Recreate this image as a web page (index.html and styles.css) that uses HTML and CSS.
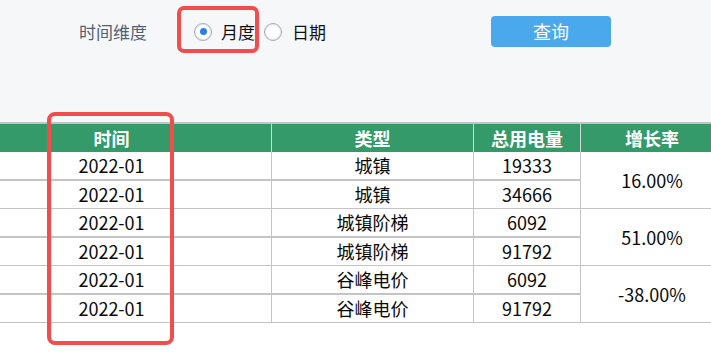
FILE: index.html
```html
<!DOCTYPE html>
<html lang="zh-CN">
<head>
<meta charset="utf-8">
<title>用电量统计</title>
<link rel="stylesheet" href="styles.css">
</head>
<body>
<div class="page">
  <div class="toolbar">
    <span class="field-label">时间维度</span>
    <label class="radio checked"><span class="radio-dot"></span><span class="radio-text">月度</span></label>
    <label class="radio"><span class="radio-dot"></span><span class="radio-text">日期</span></label>
    <button class="query-btn" type="button">查询</button>
    <span class="mark mark-radio"></span>
  </div>
  <div class="table-wrap">
    <table class="grid">
      <colgroup>
        <col class="c-time"><col class="c-type"><col class="c-total"><col class="c-rate">
      </colgroup>
      <thead>
        <tr><th>时间</th><th>类型</th><th>总用电量</th><th>增长率</th></tr>
      </thead>
      <tbody>
        <tr class="first"><td>2022-01</td><td>城镇</td><td>19333</td><td class="rate" rowspan="2">16.00%</td></tr>
        <tr class="last"><td>2022-01</td><td>城镇</td><td>34666</td></tr>
        <tr class="first"><td>2022-01</td><td>城镇阶梯</td><td>6092</td><td class="rate" rowspan="2">51.00%</td></tr>
        <tr class="last"><td>2022-01</td><td>城镇阶梯</td><td>91792</td></tr>
        <tr class="first"><td>2022-01</td><td>谷峰电价</td><td>6092</td><td class="rate" rowspan="2">-38.00%</td></tr>
        <tr class="last"><td>2022-01</td><td>谷峰电价</td><td>91792</td></tr>
      </tbody>
    </table>
    <span class="mark mark-col"></span>
  </div>
</div>
</body>
</html>
```

FILE: styles.css
```css
html, body {
  margin: 0;
  padding: 0;
  background: #ffffff;
}
body {
  width: 711px;
  height: 357px;
  overflow: hidden;
  font-family: "Noto Sans CJK SC", "Noto Sans", sans-serif;
  color: #111;
}
.page {
  position: relative;
}
.toolbar {
  position: relative;
  height: 122px;
  box-sizing: border-box;
  background: #f6f7f9;
  display: flex;
  align-items: flex-start;
  padding: 16px 0 0 79px;
}
.field-label {
  height: 31px;
  line-height: 31px;
  font-size: 17px;
  color: #4f5f74;
  width: 115px;
}
.radio {
  display: flex;
  align-items: center;
  height: 31px;
  margin-right: 9px;
}
.radio-dot {
  width: 18px;
  height: 18px;
  box-sizing: border-box;
  border-radius: 50%;
  border: 1px solid #a7adb5;
  background: #fff;
  box-shadow: inset 0 0 0 1px #e3e6ea;
  display: flex;
  align-items: center;
  justify-content: center;
}
.radio.checked .radio-dot::after {
  content: "";
  width: 7px;
  height: 7px;
  border-radius: 50%;
  background: #2f7ee6;
}
.radio-text {
  margin-left: 9px;
  font-size: 17px;
  color: #111;
}
.radio + .radio .radio-text {
  margin-left: 10px;
}
.query-btn {
  margin-left: 156px;
  width: 120px;
  height: 31px;
  border: none;
  border-radius: 4px;
  background: #4aa9ec;
  color: #fff;
  font-family: inherit;
  font-size: 18px;
  line-height: 31px;
  padding: 0;
}
.mark {
  position: absolute;
  box-sizing: border-box;
  border: 4px solid #f24c4c;
  pointer-events: none;
}
.mark-radio {
  left: 177px;
  top: 6px;
  width: 82px;
  height: 47px;
  border-radius: 7px;
}
.table-wrap {
  position: relative;
  border-top: 2px solid #c4c4c4;
}
.grid {
  margin-left: -48px;
  border-collapse: separate;
  border-spacing: 0;
  table-layout: fixed;
  width: 771px;
  font-size: 18px;
}
.c-time { width: 320px; }
.c-type { width: 202px; }
.c-total { width: 107px; }
.c-rate { width: 142px; }
.grid th {
  background: #349a69;
  color: #fff;
  font-weight: bold;
  height: 28px;
  padding: 0;
  line-height: 28px;
  border-right: 1px solid #cfd8d3;
}
.grid td {
  text-align: center;
  padding: 0;
  height: 27px;
  line-height: 27px;
  color: #0a0a0a;
  border-right: 1px solid #c4c4c4;
}
.grid th:last-child,
.grid td:last-child { border-right: none; }
.grid tr.last td:last-child { border-right: 1px solid #c4c4c4; }
.grid tr.first td { border-bottom: 2px solid #c4c4c4; }
.grid tr.last td { border-bottom: 1px solid #c4c4c4; }
.grid tr.first td.rate { border-bottom: 1px solid #c4c4c4; border-right: none; }
.mark-col {
  left: 47px;
  top: -12px;
  width: 127px;
  height: 233px;
  border-radius: 8px;
}
```
